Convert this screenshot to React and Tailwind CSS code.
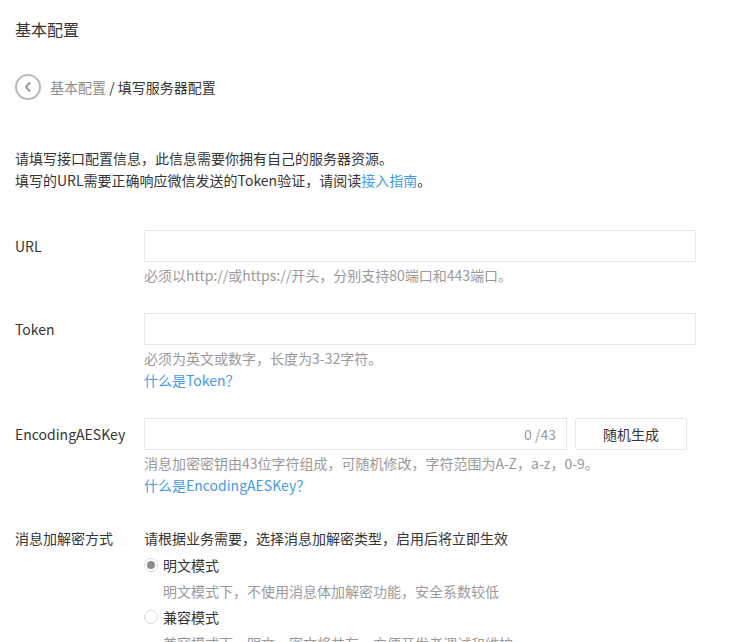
import React from "react";

const FieldRow = ({ label, children, labelClass = "leading-8" }) => (
  <div className="flex">
    <div className={"w-[129px] shrink-0 text-[14px] text-[#353535] " + labelClass}>{label}</div>
    <div className="flex-1">{children}</div>
  </div>
);

const Hint = ({ children }) => (
  <p className="mt-[2px] text-[14px] leading-[22px] text-[#9a9a9a]">{children}</p>
);

const HelpLink = ({ children }) => (
  <a href="#" className="block text-[14px] leading-[22px] text-[#459ae9]">{children}</a>
);

const Radio = ({ checked, label }) => (
  <label className="flex h-[26px] items-center text-[14px] text-[#353535]">
    <span className="mr-[5px] flex h-[14px] w-[14px] items-center justify-center rounded-full border border-[#d9dadc] bg-white">
      {checked && <span className="h-[8px] w-[8px] rounded-full bg-[#8d8d8d]" />}
    </span>
    {label}
  </label>
);

export default function App() {
  return (
    <div
      className="min-h-screen bg-white pl-[15px] text-[#353535]"
      style={{ fontFamily: '"Noto Sans CJK SC", "Liberation Sans", sans-serif' }}
    >
      <h1 className="pt-[17px] text-[16px] leading-[24px] font-normal">基本配置</h1>

      <div className="mt-[33px] flex items-center">
        <span className="flex h-[26px] w-[26px] items-center justify-center rounded-full border-2 border-[#b9b9b9]">
          <svg width="10" height="12" viewBox="0 0 10 12" fill="none">
            <path d="M6.5 2 L3 6 L6.5 10" stroke="#9a9a9a" strokeWidth="2" strokeLinecap="round" strokeLinejoin="round" />
          </svg>
        </span>
        <span className="ml-[9px] text-[14px] leading-[22px]">
          <span className="text-[#8d8d8d]">基本配置</span>
          <span className="text-[#353535]"> / 填写服务器配置</span>
        </span>
      </div>

      <div className="mt-[47px] text-[14px] leading-[22px] text-[#353535]">
        <p>请填写接口配置信息，此信息需要你拥有自己的服务器资源。</p>
        <p>
          填写的URL需要正确响应微信发送的Token验证，请阅读
          <a href="#" className="text-[#459ae9]">接入指南</a>。
        </p>
      </div>

      <div className="mt-[39px] flex flex-col">
        <FieldRow label="URL">
          <input className="block h-[32px] w-[552px] border border-[#e7e7eb] bg-white px-[10px] text-[14px] outline-none" />
          <Hint>必须以http://或https://开头，分别支持80端口和443端口。</Hint>
        </FieldRow>

        <div className="mt-[27px]">
          <FieldRow label="Token">
            <input className="block h-[32px] w-[552px] border border-[#e7e7eb] bg-white px-[10px] text-[14px] outline-none" />
            <Hint>必须为英文或数字，长度为3-32字符。</Hint>
            <HelpLink>什么是Token？</HelpLink>
          </FieldRow>
        </div>

        <div className="mt-[27px]">
          <FieldRow label="EncodingAESKey">
            <div className="flex items-center">
              <div className="flex h-[32px] w-[423px] items-center justify-end border border-[#e7e7eb] bg-white pr-[10px] text-[14px] text-[#9a9a9a]">
                0 /43
              </div>
              <button className="ml-[8px] h-[32px] w-[112px] rounded-[2px] border border-[#e4e8eb] bg-white text-[14px] text-[#353535]">
                随机生成
              </button>
            </div>
            <Hint>消息加密密钥由43位字符组成，可随机修改，字符范围为A-Z，a-z，0-9。</Hint>
            <HelpLink>什么是EncodingAESKey？</HelpLink>
          </FieldRow>
        </div>

        <div className="mt-[31px]">
          <FieldRow label="消息加解密方式" labelClass="leading-[22px]">
            <p className="text-[14px] leading-[22px]">请根据业务需要，选择消息加解密类型，启用后将立即生效</p>
            <div className="mt-[3px]">
              <Radio checked label="明文模式" />
              <p className="pl-[19px] text-[14px] leading-[26px] text-[#9a9a9a]">明文模式下，不使用消息体加解密功能，安全系数较低</p>
              <Radio label="兼容模式" />
              <p className="pl-[19px] text-[14px] leading-[26px] text-[#9a9a9a]">兼容模式下，明文、密文将共存，方便开发者调试和维护</p>
            </div>
          </FieldRow>
        </div>
      </div>
    </div>
  );
}
